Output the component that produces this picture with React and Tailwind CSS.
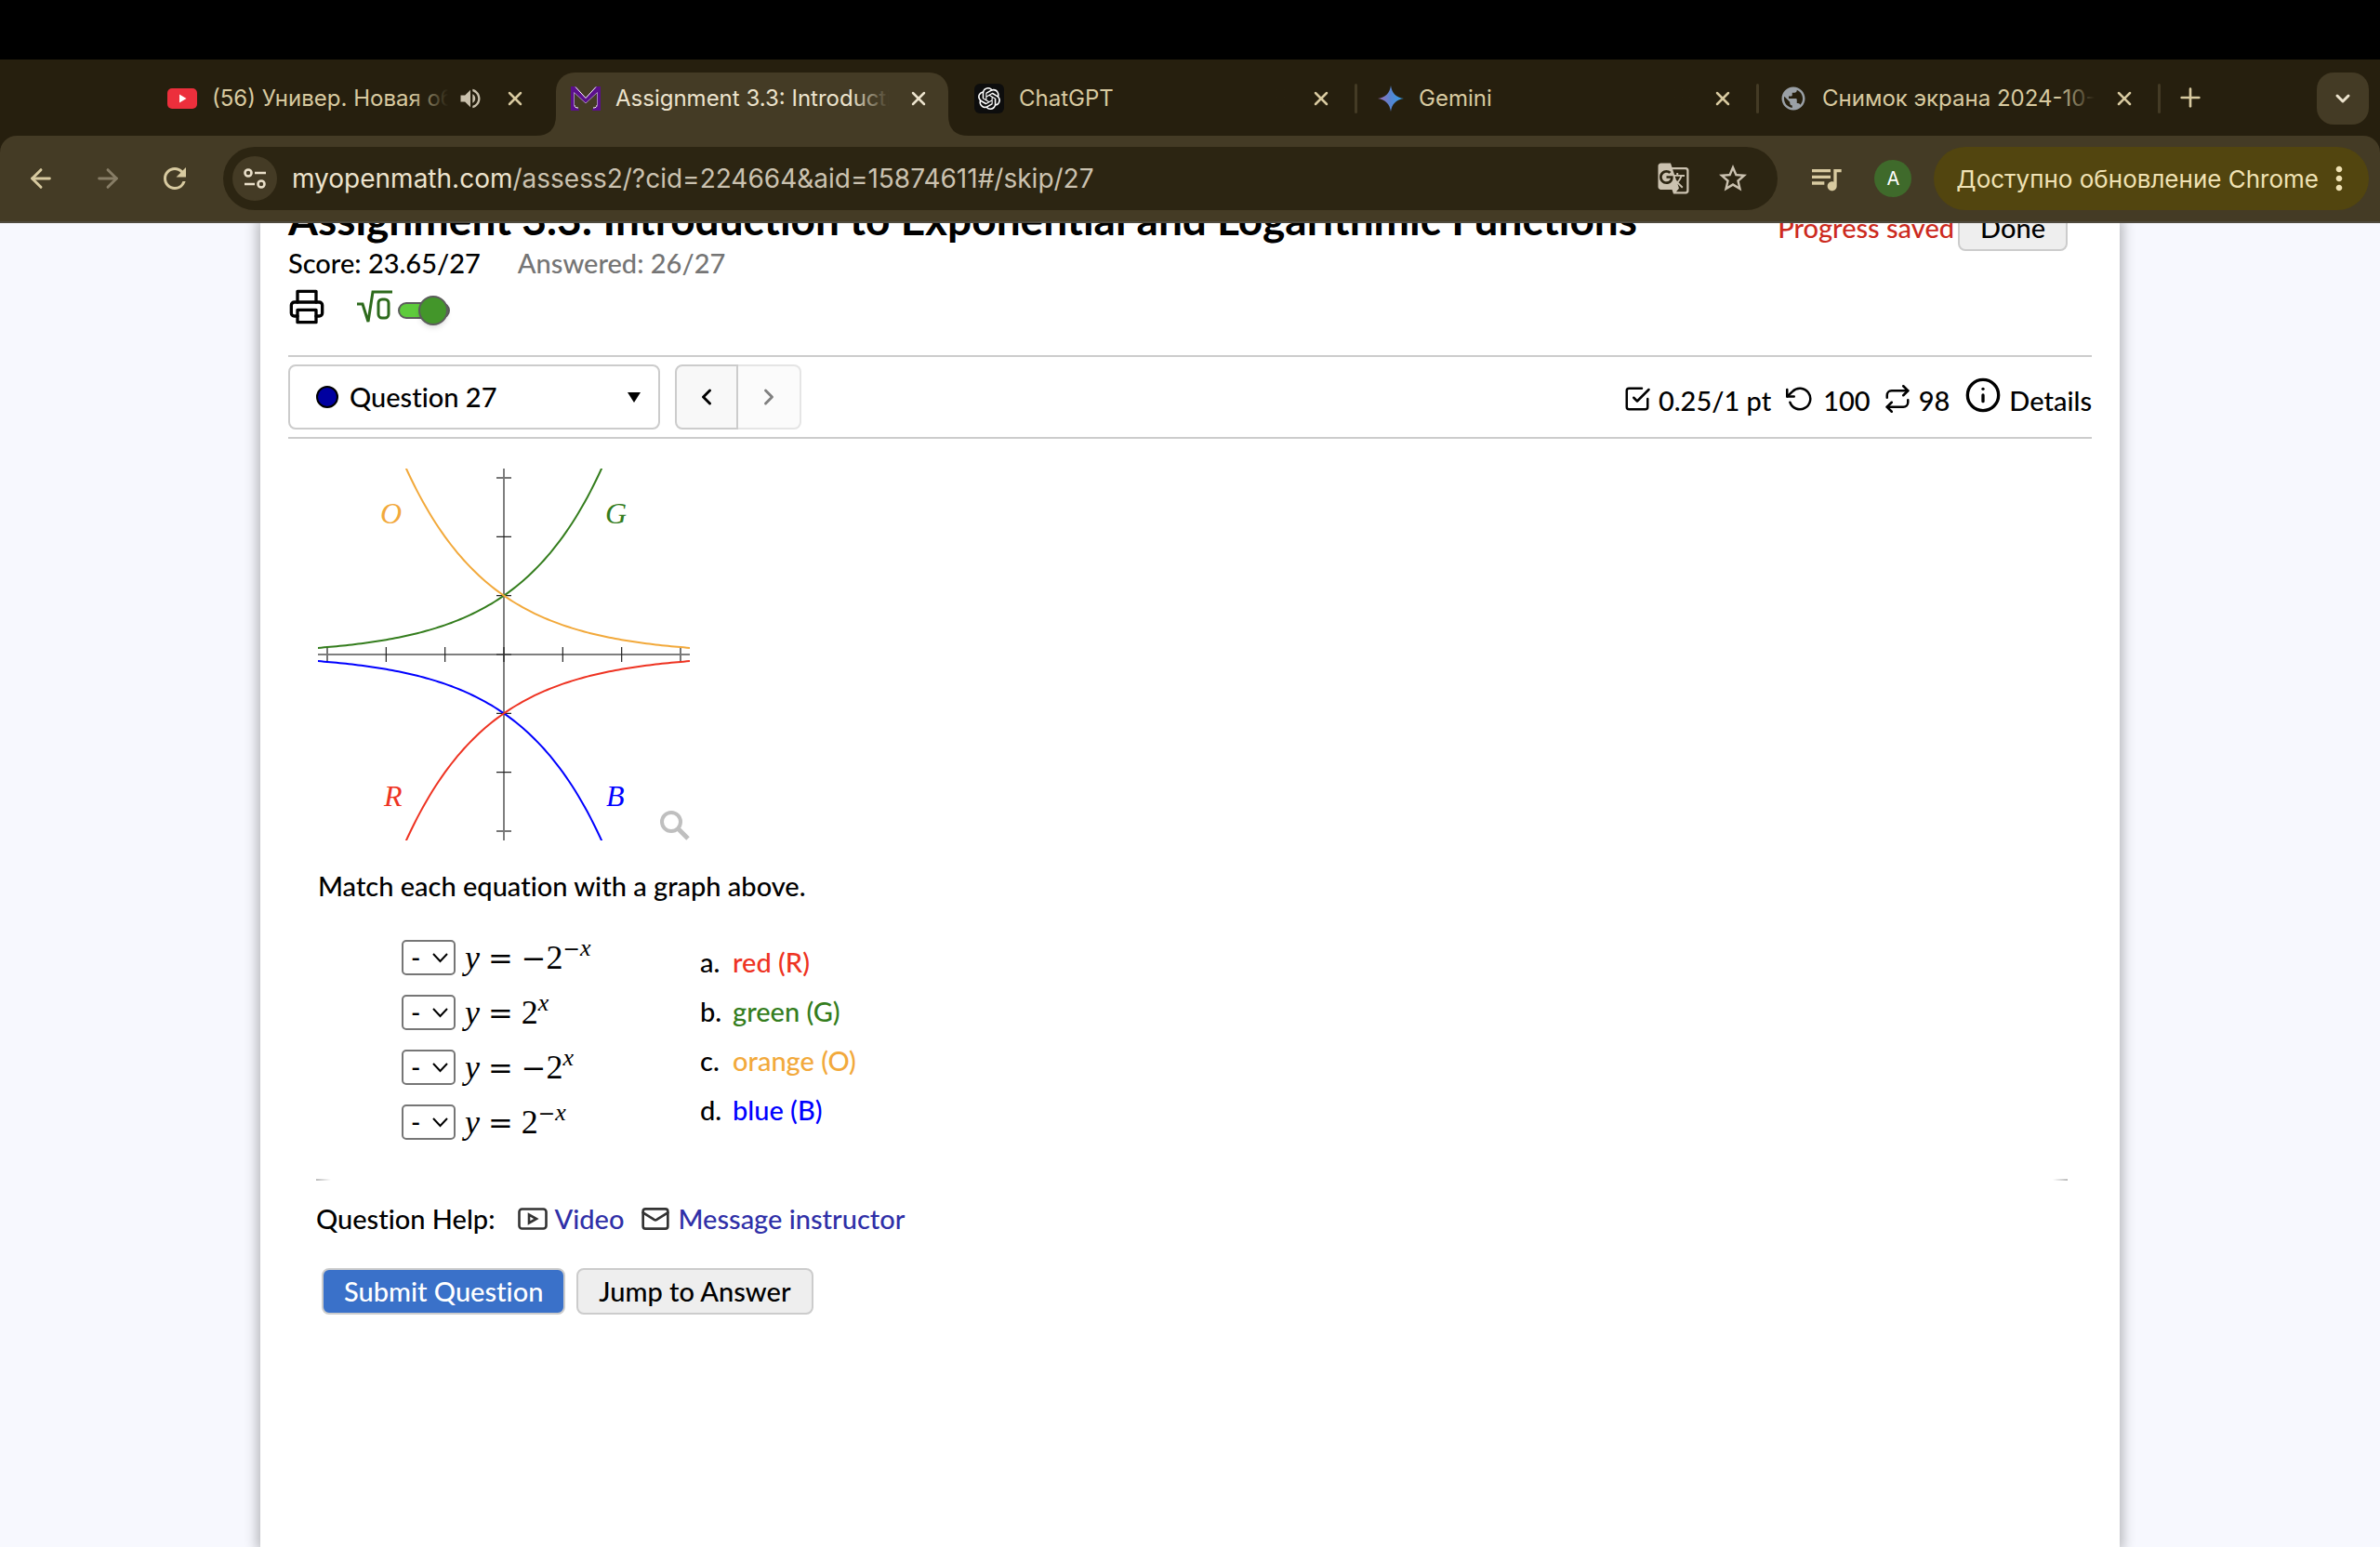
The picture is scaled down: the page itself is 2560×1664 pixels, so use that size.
import React from 'react';
import { ArrowLeft, ArrowRight, X, Plus, ChevronDown, ChevronLeft, ChevronRight, Mail } from 'lucide-react';
import { FiPrinter, FiCheckSquare, FiRotateCcw, FiRepeat, FiInfo } from 'react-icons/fi';
import { MdQueueMusic, MdStarOutline, MdGTranslate, MdRefresh, MdPublic, MdVolumeUp, MdMoreVert } from 'react-icons/md';
import { SiOpenai } from 'react-icons/si';

const chromeFont = 'font-[Inter,"Liberation_Sans",sans-serif]';
const pageFont = 'font-[Lato,"Liberation_Sans",sans-serif] font-medium [font-variant-ligatures:none]';

function YoutubeIcon() {
  return (
    <svg className="w-8 h-[22px]" viewBox="0 0 32 22">
      <rect width="32" height="22" rx="5" fill="#ec2f3c" />
      <path d="M13 6.500v9l7.500-4.500z" fill="#fff" />
    </svg>
  );
}

function MathIcon() {
  return (
    <svg className="w-8 h-[26px]" viewBox="0 0 32 26">
      <path d="M0 0h5l11 12L27 0h5v26h-9l1-3c3 0 4-1 4-3V7L16 18 4 7v13c0 2 1 3 4 3l1 3H0z" fill="#5b0f8c" />
      <path d="M5 .5l11 12L27 .5M4 20c0 2 1 3 4 3M28 20c0 2-1 3-4 3" fill="none" stroke="#fff" />
      <path d="M3.500 20V6.500L16 18 28.500 6.500V20" fill="none" stroke="#b9a3cf" strokeWidth="0.800" />
    </svg>
  );
}

function GptIcon() {
  return (
    <span className="flex w-8 h-8 items-center justify-center rounded-md bg-[#0d0d0d]">
      <SiOpenai className="size-6 text-white" />
    </span>
  );
}

function GeminiIcon() {
  return (
    <svg className="w-7 h-7" viewBox="0 0 28 28">
      <defs>
        <linearGradient id="gem" x1="0" x2="1">
          <stop offset="0" stopColor="#9a6cb4" />
          <stop offset="0.5" stopColor="#5684d1" />
          <stop offset="1" stopColor="#2f9fe8" />
        </linearGradient>
      </defs>
      <path d="M14 0c1 8 6 13 14 14-8 1-13 6-14 14-1-8-6-13-14-14 8-1 13-6 14-14z" fill="url(#gem)" />
    </svg>
  );
}

function Tab({ icon, title, width, sound, divider }) {
  return (
    <div className={`flex items-center h-[56px] ${width}`}>
      {icon}
      <span className="relative flex-1 ml-4 overflow-hidden whitespace-nowrap text-2xl text-[#d8caa0]">
        {title}
        <span className="absolute inset-y-0 right-0 w-10 bg-linear-to-r from-transparent to-[#261f0e]" />
      </span>
      {sound && <MdVolumeUp className="size-7 ml-2.5 mr-0.5 text-[#c9c0ac]" />}
      <button aria-label="Close tab" className="ml-4 p-1 text-[#d8caa0]"><X className="size-6" strokeWidth={2.5} /></button>
      {divider && <span className="ml-5 w-[3px] h-8 rounded bg-[#443b25]" />}
    </div>
  );
}

function ActiveTab() {
  return (
    <div className="relative flex items-center w-[422px] h-[68px] pl-4 pr-4 pb-3 rounded-t-[20px] bg-[#443b25]">
      <svg className="absolute bottom-0 -left-[22px] size-[22px]" viewBox="0 0 22 22"><path d="M22 0v22H0Q22 22 22 0z" fill="#443b25" /></svg>
      <svg className="absolute bottom-0 -right-[22px] size-[22px]" viewBox="0 0 22 22"><path d="M0 0v22h22Q0 22 0 0z" fill="#443b25" /></svg>
      <MathIcon />
      <span className="relative flex-1 ml-4 overflow-hidden whitespace-nowrap text-2xl text-[#ece3cd]">
        Assignment 3.3: Introduction
        <span className="absolute inset-y-0 right-0 w-10 bg-linear-to-r from-transparent to-[#443b25]" />
      </span>
      <button aria-label="Close tab" className="ml-4 p-1 text-[#ece3cd]"><X className="size-6" strokeWidth={2.5} /></button>
    </div>
  );
}

function TabStrip() {
  return (
    <div className="flex items-start h-[82px] pt-[14px] pl-[180px] pr-3 bg-[#261f0e]">
      <Tab icon={<YoutubeIcon />} title="(56) Универ. Новая общага" width="w-[390px] mr-7" sound />
      <ActiveTab />
      <Tab icon={<GptIcon />} title="ChatGPT" width="w-[412px] ml-7 mr-[22px]" divider />
      <Tab icon={<GeminiIcon />} title="Gemini" width="w-[410px] mr-[22px]" divider />
      <Tab icon={<MdPublic className="size-[30px] text-[#9aa0a6]" />} title="Снимок экрана 2024-10-11" width="w-[410px]" divider />
      <button aria-label="New tab" className="flex items-center h-[54px] ml-4 text-[#d8caa0]"><Plus className="size-8" strokeWidth={2} /></button>
      <button aria-label="Search tabs" className="flex items-center justify-center size-14 ml-auto rounded-[18px] bg-[#443b25] text-[#ece3cd]">
        <ChevronDown className="size-6" strokeWidth={3} />
      </button>
    </div>
  );
}

function Toolbar() {
  return (
    <div className="bg-[#261f0e]">
      <div className="flex items-center h-[94px] pl-7 pr-3 rounded-t-[18px] border-b-2 border-[#4f4a3e] bg-[#443b25] text-[#d8caa0]">
        <button aria-label="Back"><ArrowLeft className="size-8" strokeWidth={2.2} /></button>
        <button aria-label="Forward" className="ml-10 text-[#877d66]"><ArrowRight className="size-8" strokeWidth={2.2} /></button>
        <button aria-label="Reload" className="ml-[38px]"><MdRefresh className="size-9" /></button>
        <div className="flex flex-1 items-center h-[68px] ml-[34px] pl-[10px] pr-[30px] rounded-full bg-[#2c2512]">
          <button aria-label="Site information" className="flex items-center justify-center size-12 rounded-full bg-[#443b25]">
            <svg className="size-7" viewBox="0 0 28 28" fill="none" stroke="#e9dfc9" strokeWidth="2.600">
              <circle cx="7" cy="8" r="3.500" />
              <path d="M14 8h12M3 20h11" />
              <circle cx="21" cy="20" r="3.500" />
            </svg>
          </button>
          <span className="flex-1 ml-4 text-[28px] text-[#cbc2b0]"><span className="text-[#ece3cd]">myopenmath.com</span>/assess2/?cid=224664&amp;aid=15874611#/skip/27</span>
          <button aria-label="Translate"><MdGTranslate className="size-9 text-[#cbc2b0]" /></button>
          <button aria-label="Bookmark"><MdStarOutline className="size-9 ml-7 text-[#cbc2b0]" /></button>
        </div>
        <button aria-label="Media controls" className="ml-8"><MdQueueMusic className="size-10" /></button>
        <button className="flex items-center justify-center size-10 ml-8 rounded-full bg-[#3f6a2b] text-xl text-white">A</button>
        <button className="flex items-center h-[68px] ml-6 pl-6 rounded-full bg-[#52450f] text-[26px] text-[#f0e2b4]">
          Доступно обновление Chrome <MdMoreVert className="size-10 ml-0.5 mr-3" />
        </button>
      </div>
    </div>
  );
}

function RootIcon() {
  return (
    <svg className="w-[38px] h-9" viewBox="0 0 38 36" fill="none" stroke="#2d6a1c" strokeWidth="3">
      <path d="M0 15h6l6 19 5-32h21" />
      <rect x="23" y="10" width="11" height="20" rx="4" />
    </svg>
  );
}

function AssessHeader() {
  return (
    <header>
      <div className="flex items-start justify-between -mt-5">
        <h1 className="-mt-2 text-[46px]/[48px] font-bold whitespace-nowrap">Assignment 3.3: Introduction to Exponential and Logarithmic Functions</h1>
        <div className="flex items-center mr-[26px]">
          <span className="mr-1 text-[#cc2a1e]">Progress saved</span>
          <button className="h-[50px] px-[22px] rounded-lg border-2 border-[#ccc] bg-[#eee]">Done</button>
        </div>
      </div>
      <div className="-mt-1 flex gap-10">
        <span>Score: 23.65/27</span>
        <span className="text-[#757575]">Answered: 26/27</span>
      </div>
      <div className="flex items-center mt-[10px]">
        <button aria-label="Print"><FiPrinter className="size-10" /></button>
        <label className="flex items-center ml-[34px]">
          <RootIcon />
          <input type="checkbox" defaultChecked className="sr-only" aria-label="Equation editor" />
          <span className="flex items-center justify-end w-[56px] ml-[6px] mt-2 h-[18px] rounded-full border-2 border-[#5c5c5c] bg-[#5ecb3c]">
            <span className="size-8 shrink-0 rounded-full border-2 border-[#5c5c5c] bg-[#43962a] shadow-md" />
          </span>
        </label>
      </div>
    </header>
  );
}

function QuestionBar() {
  return (
    <div className="flex items-center h-[90px] mt-8 border-y-2 border-[#ccc]">
      <button className="flex items-center w-[400px] h-[70px] pl-7 pr-[19px] rounded-lg border-2 border-[#ccc]">
        <span className="size-6 mr-3 rounded-full border-2 border-black bg-[#0000a0]" />
        Question 27
        <svg className="w-[14px] h-[11px] ml-auto" viewBox="0 0 14 11"><path d="M0 0h14L7 11z" /></svg>
      </button>
      <button aria-label="Previous question" className="flex items-center justify-center w-[68px] h-[70px] ml-4 rounded-l-lg border-2 border-[#ccc] bg-[#f8f8f8]"><ChevronLeft className="size-7" strokeWidth={2.5} /></button>
      <button aria-label="Next question" disabled className="flex items-center justify-center w-[68px] h-[70px] rounded-r-lg border-2 border-l-0 border-[#e5e5e5] bg-[#fbfbfb] text-[#808080]"><ChevronRight className="size-7" strokeWidth={2.5} /></button>
      <div className="flex items-center ml-auto pt-2">
        <FiCheckSquare className="size-[30px] mr-2 mb-1" />0.25/1 pt
        <FiRotateCcw className="size-[30px] ml-4 mr-2.5 mb-1" />100
        <FiRepeat className="size-[30px] ml-3.5 mr-2 mb-1" />98
        <button className="flex items-center ml-4"><FiInfo className="size-10 mr-2 mb-3" />Details</button>
      </div>
    </div>
  );
}

const UNIT = 63.333;

// samples y = sign * 2^(dir * x) across the visible window
function curve(sign, dir) {
  const points = [];
  for (let i = 0; i <= 120; i++) {
    const x = -3.158 + (i / 120) * 6.316;
    const y = sign * Math.pow(2, dir * x);
    points.push(`${200 + x * UNIT},${200 - y * UNIT}`);
  }
  return points.join(' ');
}

function Graph() {
  const ticks = [-3, -2, -1, 0, 1, 2, 3];
  return (
    <svg className="w-[400px] h-[400px] overflow-hidden" viewBox="0 0 400 400" fill="none">
      <g stroke="#000" strokeWidth="2" opacity="0.5"><path d="M0 200h400M200 0v400" /></g>
      {ticks.map((t) => (
        <path
          key={t}
          d={`M${200 + t * UNIT} 192v16M192 ${200 - t * UNIT}h16`}
          stroke={Math.abs(t) === 3 ? '#777' : '#222'}
          strokeWidth={Math.abs(t) === 3 ? 2 : 1.2}
        />
      ))}
      <polyline points={curve(-1, 1)} stroke="#0000ff" strokeWidth="2" />
      <polyline points={curve(-1, -1)} stroke="#ee3322" strokeWidth="2" />
      <polyline points={curve(1, 1)} stroke="#347d1d" strokeWidth="2" />
      <polyline points={curve(1, -1)} stroke="#f2a93b" strokeWidth="2" />
      <g className='font-["Liberation_Serif",serif] italic' fontSize="32">
        <text x="67" y="59" fill="#f2a93b">O</text>
        <text x="309" y="59" fill="#347d1d">G</text>
        <text x="71" y="363" fill="#ee3322">R</text>
        <text x="310" y="363" fill="#0000ff">B</text>
      </g>
      <g stroke="#bfbfbf" strokeWidth="4"><circle cx="380" cy="380" r="10" /><path d="M387 387l11 11" strokeWidth="5" /></g>
    </svg>
  );
}

const EQUATIONS = [
  { id: 'q1', negative: true, powerNegative: true },
  { id: 'q2', negative: false, powerNegative: false },
  { id: 'q3', negative: true, powerNegative: false },
  { id: 'q4', negative: false, powerNegative: true },
];

const CHOICES = [
  { key: 'a', text: 'red (R)', color: 'text-[#ee3322]' },
  { key: 'b', text: 'green (G)', color: 'text-[#347d1d]' },
  { key: 'c', text: 'orange (O)', color: 'text-[#f2a93b]' },
  { key: 'd', text: 'blue (B)', color: 'text-[#0000ff]' },
];

function Equation({ id, negative, powerNegative }) {
  return (
    <li className="flex items-center h-[38px]">
      <span className="relative flex">
        <select id={id} className="w-[58px] h-[38px] pl-2 appearance-none rounded-[5px] border-2 border-[#767676] bg-white text-[28px]/[30px]">
          <option>-</option>
          {CHOICES.map((c) => <option key={c.key}>{c.key}</option>)}
        </select>
        <svg className="absolute right-[8px] top-[14px] w-[17px] h-[11px] pointer-events-none" viewBox="0 0 17 11" fill="none" stroke="#000" strokeWidth="2"><path d="M1 1l7.500 8L16 1" /></svg>
      </span>
      <label htmlFor={id} className='ml-[10px] font-["Liberation_Serif",serif] font-normal text-[36px]/[38px] whitespace-nowrap'>
        <i>y</i>
        <span className='mx-[9px] font-["DejaVu_Serif",serif] text-[32px]/[38px]'>=</span>
        {negative && <span className='font-["DejaVu_Serif",serif] text-[32px]/[38px]'>−</span>}2
        <sup className="text-[26px]/none -top-[14px]">
          {powerNegative && <span className='font-["DejaVu_Serif",serif] text-[22px]/none'>−</span>}
          <i>x</i>
        </sup>
      </label>
    </li>
  );
}

function Question() {
  return (
    <section className="pl-8 pt-8">
      <Graph />
      <p className="mt-8">Match each equation with a graph above.</p>
      <div className="flex mt-[41px] pl-[90px]">
        <ul className="flex flex-col gap-[21px] w-[321px]">
          {EQUATIONS.map((eq) => <Equation key={eq.id} {...eq} />)}
        </ul>
        <ul className="mt-[7px]">
          {CHOICES.map((c) => (
            <li key={c.key} className="flex h-[53px]"><span className="w-[35px]">{c.key}.</span><span className={c.color}>{c.text}</span></li>
          ))}
        </ul>
      </div>
    </section>
  );
}

function QuestionHelp() {
  return (
    <div className="ml-[30px] mr-[26px]">
      <div className="flex justify-between mt-[38px]">
        <span className="w-4 h-[2px] bg-linear-to-r from-[#bbb] to-transparent" />
        <span className="w-4 h-[2px] bg-linear-to-l from-[#bbb] to-transparent" />
      </div>
      <div className="flex items-center mt-6">
        Question Help:
        <svg className="w-8 h-6 ml-6 mr-2" viewBox="0 0 32 24" fill="none" stroke="#333" strokeWidth="2.600"><rect x="1.500" y="1.500" width="29" height="21" rx="3" /><path d="M12 7.500v9l8-4.500z" /></svg>
        <a href="#video" className="text-[#3030a8]">Video</a>
        <Mail className="w-9 h-8 ml-4 mr-1.5 text-[#333]" strokeWidth={2} />
        <a href="#message" className="text-[#3030a8]">Message instructor</a>
      </div>
      <div className="flex gap-3 mt-9 ml-[6px]">
        <button className="h-[50px] px-[22px] rounded-lg border-2 border-[#ccc] bg-[#3a71c9] text-white">Submit Question</button>
        <button className="h-[50px] px-[22px] rounded-lg border-2 border-[#ccc] bg-[#eee]">Jump to Answer</button>
      </div>
    </div>
  );
}

export default function App() {
  return (
    <div className="flex flex-col min-h-screen bg-[#f7f8fe]">
      <div className={chromeFont}>
        <div className="h-16 bg-black" />
        <TabStrip />
        <Toolbar />
      </div>
      <div className="flex flex-1 overflow-hidden">
        <main className={`flex-1 max-w-[2000px] mx-auto px-[30px] bg-white text-[29px]/[34px] text-black shadow-[0_0_12px_4px_rgba(0,0,0,0.25)] ${pageFont}`}>
          <AssessHeader />
          <QuestionBar />
          <Question />
          <QuestionHelp />
        </main>
      </div>
    </div>
  );
}
